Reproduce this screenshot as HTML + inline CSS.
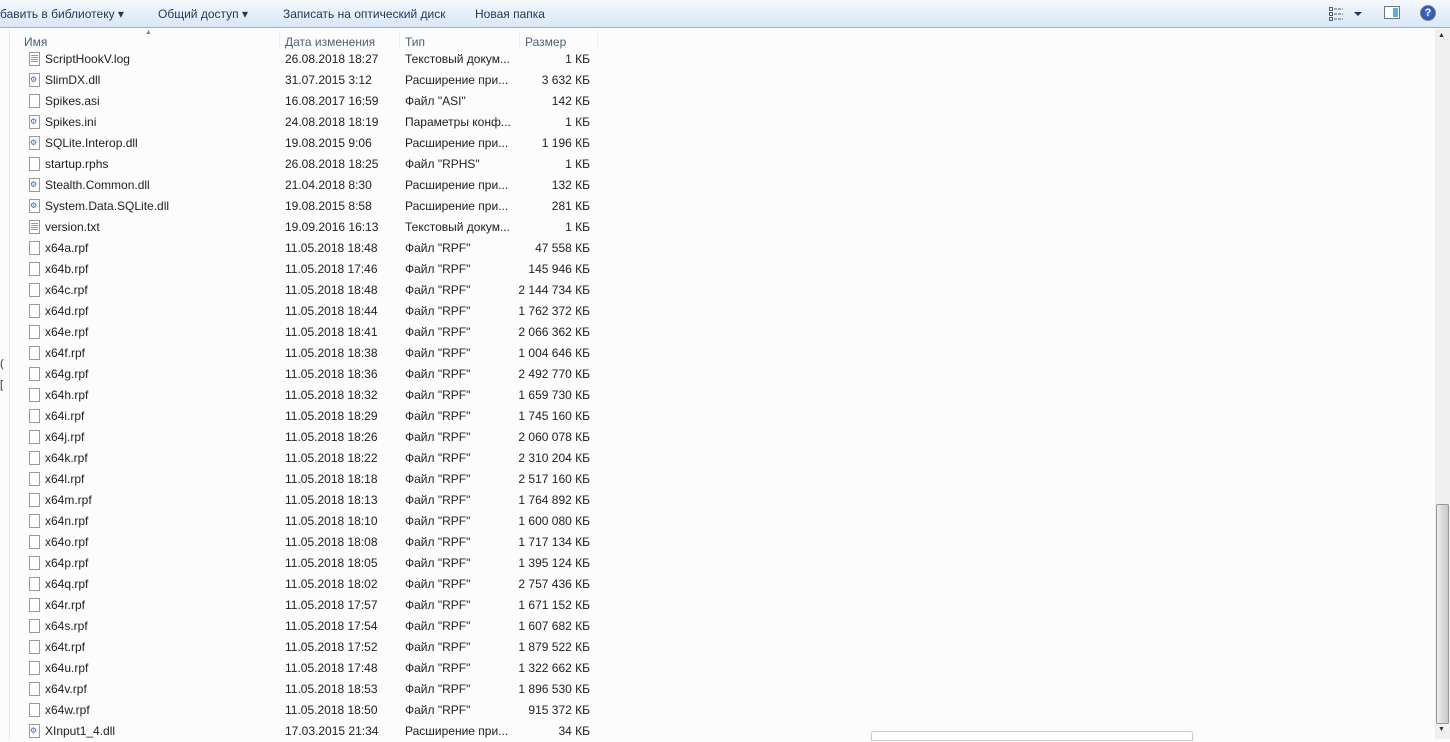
<!DOCTYPE html>
<html><head><meta charset="utf-8"><style>
*{margin:0;padding:0;box-sizing:border-box}
body{width:1450px;height:739px;overflow:hidden;background:#fcfcfc;font-family:"Liberation Sans",sans-serif;font-size:12px;color:#1e1e1e;position:relative}
.tb{position:absolute;left:0;top:0;width:1450px;height:28px;background:linear-gradient(#f6f9fd,#e4edf8 60%,#dce7f5);border-bottom:1px solid #a0afc3}
.tb span{position:absolute;top:7px;color:#1e395b;font-size:12px}
.hdr{position:absolute;top:35px;height:16px;color:#4c607a}
.sep{position:absolute;top:30px;width:1px;height:20px;background:#eef1f5}
.row{position:absolute;left:0;height:21px;width:600px}
.row div{position:absolute;top:3px;white-space:nowrap}
.ic{position:absolute;left:29px;top:3px;width:11px;height:14px;border:1px solid #9a9a9a;background:#fff}
.ic.t::after{content:"";position:absolute;left:1px;right:1px;top:2px;height:8px;background:repeating-linear-gradient(#999 0 1px,transparent 1px 2px)}
.ic.d::after{content:"⚙";position:absolute;left:0;top:1px;font-size:8px;color:#3a62a8}
.n{left:45px}.dt{left:285px}.ty{left:405px}.sz{right:10px;text-align:right}
.sb{position:absolute;left:1435px;top:29px;width:15px;height:710px;background:#f0f0f0}
.th{position:absolute;left:1436px;top:504px;width:13px;height:220px;border:1px solid #979797;border-radius:2px;background:linear-gradient(90deg,#eee,#dadada,#c9c9c9)}
</style></head><body>
<div class="tb">
<span style="left:0">бавить в библиотеку ▾</span>
<span style="left:158px">Общий доступ ▾</span>
<span style="left:283px">Записать на оптический диск</span>
<span style="left:475px">Новая папка</span>
<svg style="position:absolute;left:1329px;top:7px" width="40" height="14"><g fill="none" stroke="#506070"><rect x="0.5" y="0.5" width="3" height="3"/><rect x="0.5" y="5.5" width="3" height="3"/><rect x="0.5" y="10.5" width="3" height="3"/><path d="M5 2h9M5 7h9M5 12h9" stroke-dasharray="3 1"/></g><path d="M25 5h8l-4 4z" fill="#1e395b"/></svg>
<div style="position:absolute;left:1384px;top:6px;width:16px;height:13px;border:1px solid #607890;background:#fff"><div style="position:absolute;right:1px;top:1px;width:5px;height:9px;background:#5ab0d8"></div></div>
<div style="position:absolute;left:1420px;top:5px;width:16px;height:16px;border-radius:50%;background:radial-gradient(#4a7de0,#1c3f9a);border:1px solid #888;color:#fff;font-weight:bold;font-size:11px;text-align:center;line-height:14px">?</div>
</div>
<div style="position:absolute;left:9px;top:29px;width:1px;height:710px;background:#dfe5ec"></div>
<div style="position:absolute;left:0;top:358px;font-size:11px;color:#333">(</div>
<div style="position:absolute;left:0;top:379px;font-size:11px;color:#333">[</div>
<div class="sep" style="left:279px"></div><div class="sep" style="left:399px"></div><div class="sep" style="left:519px"></div><div class="sep" style="left:597px"></div>
<div style="position:absolute;left:145px;top:29px;font-size:7px;color:#7a8a9a">▲</div>
<div class="hdr" style="left:24px">Имя</div>
<div class="hdr" style="left:285px">Дата изменения</div>
<div class="hdr" style="left:405px">Тип</div>
<div class="hdr" style="left:525px">Размер</div>
<div id="rows"></div>
<div style="position:absolute;left:871px;top:731px;width:322px;height:10px;border:1px solid #c8c8c8;border-radius:3px 3px 0 0;background:#fff"></div>
<div class="sb"><div style="position:absolute;left:3px;top:3px;font-size:7px;color:#333">▲</div><div style="position:absolute;left:3px;top:697px;font-size:7px;color:#333">▼</div></div>
<div class="th"></div>
<script>
const R=[["ScriptHookV.log","26.08.2018 18:27","Текстовый докум...","1 КБ","t"],
["SlimDX.dll","31.07.2015 3:12","Расширение при...","3 632 КБ","d"],
["Spikes.asi","16.08.2017 16:59","Файл \"ASI\"","142 КБ",""],
["Spikes.ini","24.08.2018 18:19","Параметры конф...","1 КБ","d"],
["SQLite.Interop.dll","19.08.2015 9:06","Расширение при...","1 196 КБ","d"],
["startup.rphs","26.08.2018 18:25","Файл \"RPHS\"","1 КБ",""],
["Stealth.Common.dll","21.04.2018 8:30","Расширение при...","132 КБ","d"],
["System.Data.SQLite.dll","19.08.2015 8:58","Расширение при...","281 КБ","d"],
["version.txt","19.09.2016 16:13","Текстовый докум...","1 КБ","t"]];
const rp=[["a","18:48","47 558"],["b","17:46","145 946"],["c","18:48","2 144 734"],["d","18:44","1 762 372"],["e","18:41","2 066 362"],["f","18:38","1 004 646"],["g","18:36","2 492 770"],["h","18:32","1 659 730"],["i","18:29","1 745 160"],["j","18:26","2 060 078"],["k","18:22","2 310 204"],["l","18:18","2 517 160"],["m","18:13","1 764 892"],["n","18:10","1 600 080"],["o","18:08","1 717 134"],["p","18:05","1 395 124"],["q","18:02","2 757 436"],["r","17:57","1 671 152"],["s","17:54","1 607 682"],["t","17:52","1 879 522"],["u","17:48","1 322 662"],["v","18:53","1 896 530"],["w","18:50","915 372"]];
rp.forEach(r=>R.push(["x64"+r[0]+".rpf","11.05.2018 "+r[1],"Файл \"RPF\"",r[2]+" КБ",""]));
R.push(["XInput1_4.dll","17.03.2015 21:34","Расширение при...","34 КБ","d"]);
let h="";R.forEach((r,i)=>{h+=`<div class="row" style="top:${49+21*i}px"><span class="ic ${r[4]}"></span><div class="n">${r[0]}</div><div class="dt">${r[1]}</div><div class="ty">${r[2]}</div><div class="sz">${r[3]}</div></div>`});
document.getElementById("rows").innerHTML=h;
</script>
</body></html>
